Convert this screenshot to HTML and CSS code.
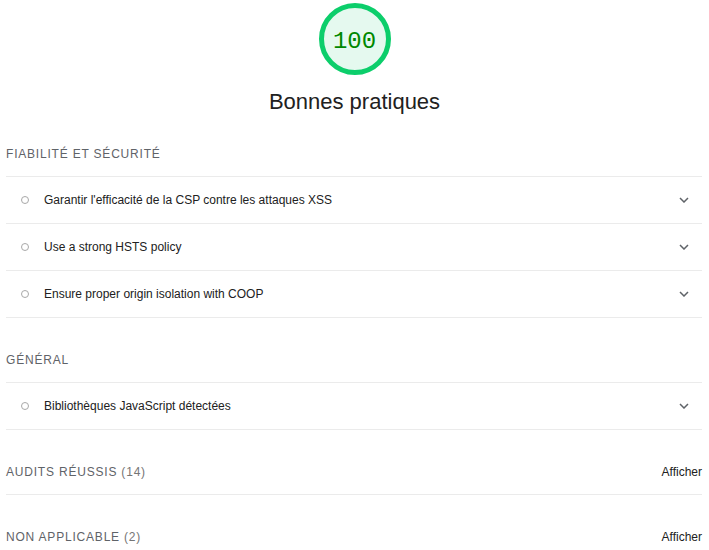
FILE: index.html
```html
<!DOCTYPE html>
<html lang="fr">
<head>
<meta charset="utf-8">
<link rel="stylesheet" href="styles.css">
</head>
<body>
<div class="report">
  <div class="score">
    <div class="gauge"><span class="gauge-value">100</span></div>
    <div class="score-title">Bonnes pratiques</div>
  </div>

  <div class="group-title first">Fiabilité et sécurité</div>
  <div class="audit"><span class="dot"></span><span class="audit-title">Garantir l'efficacité de la CSP contre les attaques XSS</span><svg class="chev" viewBox="0 0 10 6" width="10" height="6"><path d="M1 1l4 4 4-4" fill="none" stroke="#5f6368" stroke-width="1.5"/></svg></div>
  <div class="audit"><span class="dot"></span><span class="audit-title">Use a strong HSTS policy</span><svg class="chev" viewBox="0 0 10 6" width="10" height="6"><path d="M1 1l4 4 4-4" fill="none" stroke="#5f6368" stroke-width="1.5"/></svg></div>
  <div class="audit"><span class="dot"></span><span class="audit-title">Ensure proper origin isolation with COOP</span><svg class="chev" viewBox="0 0 10 6" width="10" height="6"><path d="M1 1l4 4 4-4" fill="none" stroke="#5f6368" stroke-width="1.5"/></svg></div>

  <div class="group-title">Général</div>
  <div class="audit"><span class="dot"></span><span class="audit-title">Bibliothèques JavaScript détectées</span><svg class="chev" viewBox="0 0 10 6" width="10" height="6"><path d="M1 1l4 4 4-4" fill="none" stroke="#5f6368" stroke-width="1.5"/></svg></div>

  <div class="group-title toggle"><span>Audits réussis <span class="count">(14)</span></span><span class="show">Afficher</span></div>
  <div class="group-title toggle noline"><span>Non applicable <span class="count">(2)</span></span><span class="show">Afficher</span></div>
</div>
</body>
</html>
```

FILE: styles.css
```css
html, body {
  margin: 0;
  padding: 0;
  background: #fff;
}
body {
  font-family: "Liberation Sans", Arial, sans-serif;
  color: #212121;
}
.report {
  padding: 0 7px 0 6px;
}
.score {
  display: flex;
  flex-direction: column;
  align-items: center;
  padding-top: 3px;
  padding-left: 1px;
}
.gauge {
  box-sizing: border-box;
  width: 72px;
  height: 72px;
  border-radius: 50%;
  border: 5px solid #0cce6b;
  background: #e5f9ef;
  display: flex;
  align-items: center;
  justify-content: center;
}
.gauge-value {
  font-family: "Liberation Mono", "DejaVu Sans Mono", monospace;
  font-size: 24px;
  color: #008800;
  line-height: 1;
  padding-top: 5px;
}
.score-title {
  margin-top: 13px;
  font-size: 22px;
  line-height: 28px;
  color: #212121;
}
.group-title {
  text-transform: uppercase;
  font-size: 12px;
  letter-spacing: 0.8px;
  color: #5f6368;
  line-height: 20px;
  padding: 32px 0 12px;
  border-bottom: 1px solid #ebebeb;
}
.group-title.first {
  padding-top: 28px;
}
.count {
  color: #757575;
}
.toggle {
  display: flex;
  justify-content: space-between;
}
.show {
  text-transform: none;
  letter-spacing: 0;
  color: #212121;
}
.noline {
  border-bottom: none;
}
.audit {
  display: flex;
  align-items: center;
  height: 46px;
  border-bottom: 1px solid #ebebeb;
  font-size: 12px;
}
.dot {
  box-sizing: border-box;
  width: 8px;
  height: 8px;
  border-radius: 50%;
  border: 1.5px solid #a8a8a8;
  margin-left: 15px;
  margin-right: 15px;
  flex: none;
}
.audit-title {
  flex: 1;
}
.chev {
  margin-right: 13px;
  flex: none;
}
```
